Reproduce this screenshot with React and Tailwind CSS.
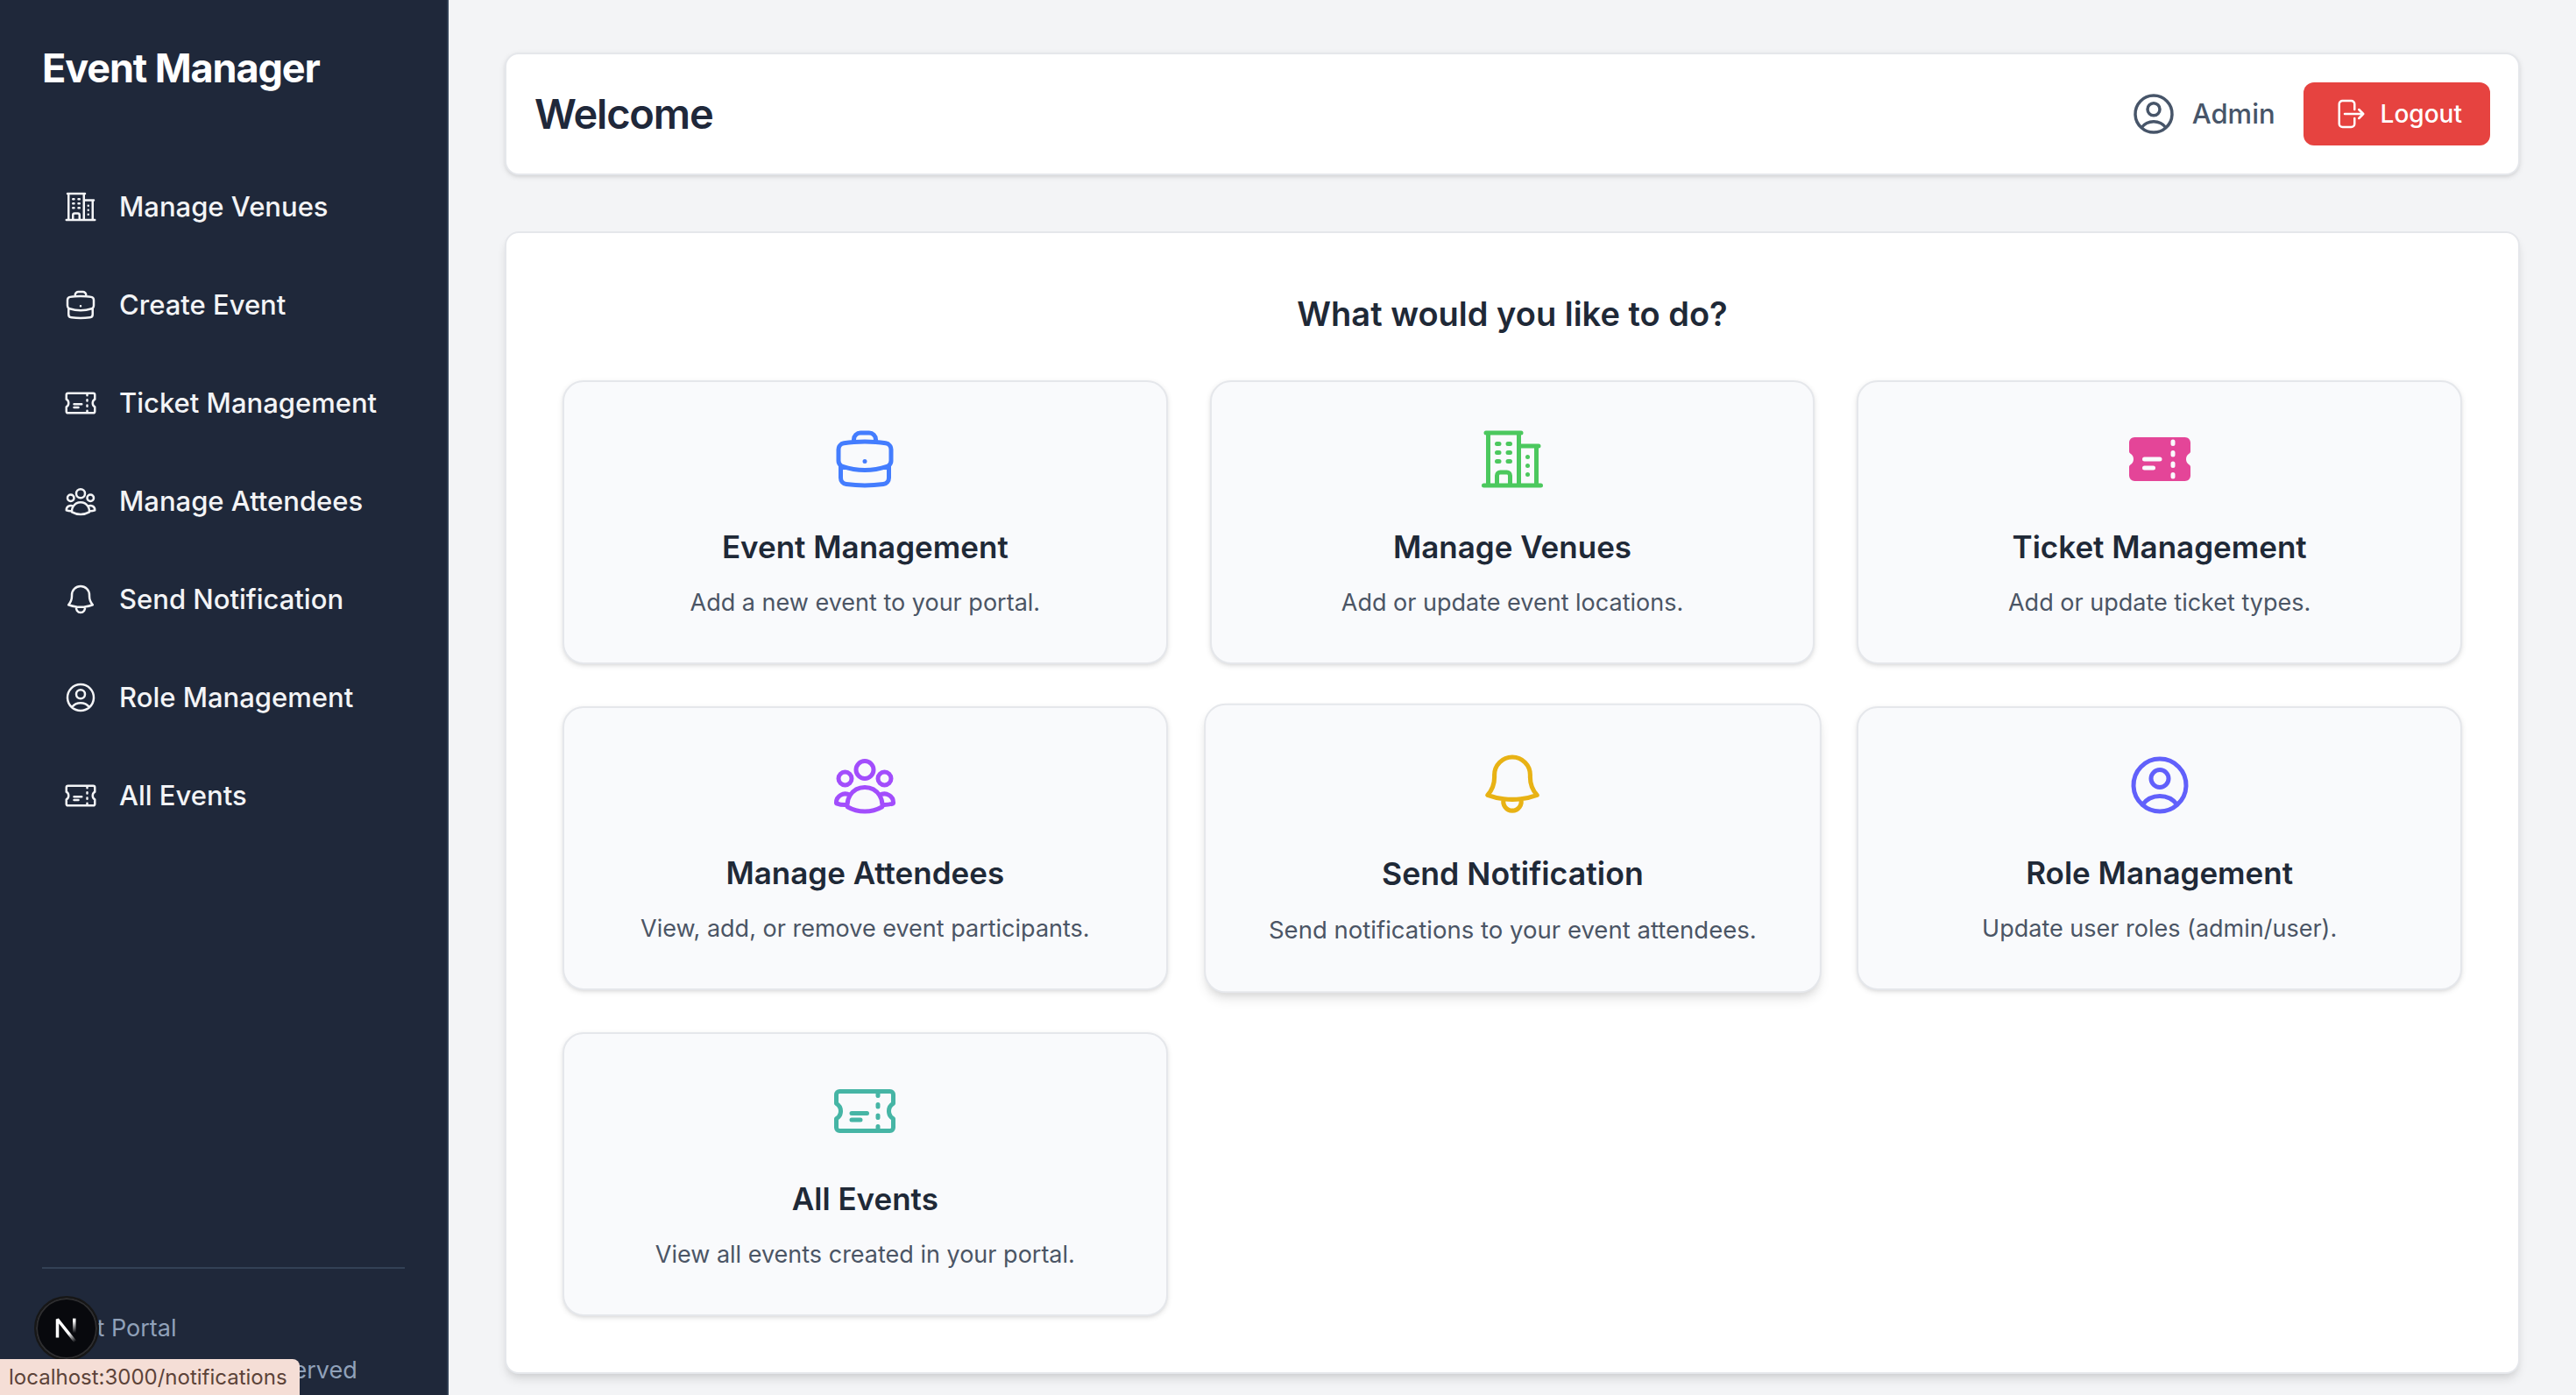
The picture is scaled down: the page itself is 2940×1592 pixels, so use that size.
import {
  HiOutlineArrowRightOnRectangle,
  HiOutlineBell,
  HiOutlineBriefcase,
  HiOutlineBuildingOffice2,
  HiOutlineTicket,
  HiOutlineUserCircle,
  HiOutlineUserGroup,
  HiTicket,
} from "react-icons/hi2";

const navItems = [
  { label: "Manage Venues", icon: HiOutlineBuildingOffice2 },
  { label: "Create Event", icon: HiOutlineBriefcase },
  { label: "Ticket Management", icon: HiOutlineTicket },
  { label: "Manage Attendees", icon: HiOutlineUserGroup },
  { label: "Send Notification", icon: HiOutlineBell },
  { label: "Role Management", icon: HiOutlineUserCircle },
  { label: "All Events", icon: HiOutlineTicket },
];

const cards = [
  { title: "Event Management", text: "Add a new event to your portal.", icon: HiOutlineBriefcase, color: "text-[#447dfe]" },
  { title: "Manage Venues", text: "Add or update event locations.", icon: HiOutlineBuildingOffice2, color: "text-[#4cc85e]" },
  { title: "Ticket Management", text: "Add or update ticket types.", icon: HiTicket, color: "text-[#e44598]" },
  { title: "Manage Attendees", text: "View, add, or remove event participants.", icon: HiOutlineUserGroup, color: "text-[#a24dfc]" },
  { title: "Send Notification", text: "Send notifications to your event attendees.", icon: HiOutlineBell, color: "text-[#e8b214]", active: true },
  { title: "Role Management", text: "Update user roles (admin/user).", icon: HiOutlineUserCircle, color: "text-[#6160fb]" },
  { title: "All Events", text: "View all events created in your portal.", icon: HiOutlineTicket, color: "text-[#46b5a5]" },
];

function Sidebar() {
  return (
    <aside className="sticky top-0 flex h-screen w-[512px] shrink-0 flex-col border-r-2 border-[#334155] bg-[#1f283a] px-12 pt-11 pb-2 text-[#f3f4f6]">
      <h1 className="text-[45px] leading-[68px] font-bold tracking-tight text-white">Event Manager</h1>
      <nav className="mt-[76px] flex flex-1 flex-col gap-4">
        {navItems.map(({ label, icon: Icon }) => (
          <a key={label} href="#" className="flex items-center gap-6 rounded-2xl p-6 text-[31px] leading-[48px] font-medium whitespace-nowrap">
            <Icon className="size-10 shrink-0" aria-hidden="true" />
            {label}
          </a>
        ))}
      </nav>
      <footer className="flex flex-col gap-2 border-t-2 border-[#334155] pt-12 text-[27px] leading-[40px] whitespace-nowrap text-[#90a1b9]">
        <p>Event Portal</p>
        <p>© 2025. All Rights Reserved</p>
      </footer>
    </aside>
  );
}

function Header() {
  return (
    <header className="flex items-center justify-between rounded-2xl border-2 border-[#e5e7eb] bg-white p-8 shadow-[0_2px_6px_rgba(0,0,0,0.1),0_2px_4px_-2px_rgba(0,0,0,0.1)]">
      <h2 className="text-[47px] leading-[68px] font-semibold tracking-tight text-[#1f283a]">Welcome</h2>
      <div className="flex items-center gap-8">
        <div className="flex items-center gap-4 text-[#475569]">
          <HiOutlineUserCircle className="size-14" aria-hidden="true" />
          <span className="text-[31px] leading-[48px] font-medium">Admin</span>
        </div>
        <button type="button" className="flex items-center gap-4 rounded-xl bg-[#e64340] px-8 py-4 text-[28px] leading-[40px] font-medium text-white">
          <HiOutlineArrowRightOnRectangle className="size-10" aria-hidden="true" />
          Logout
        </button>
      </div>
    </header>
  );
}

function ActionCard({ title, text, icon: Icon, color, active }) {
  const state = active
    ? "scale-[1.02] shadow-[0_8px_12px_-2px_rgba(0,0,0,0.1),0_4px_8px_-4px_rgba(0,0,0,0.1)]"
    : "shadow-[0_2px_6px_rgba(0,0,0,0.1),0_2px_4px_-2px_rgba(0,0,0,0.1)]";
  return (
    <a href="#" className={`flex flex-col items-center rounded-3xl border-2 border-[#e5e7eb] bg-[#f9fafc] p-12 text-center ${state}`}>
      <Icon className={`size-20 ${color}`} aria-hidden="true" />
      <h4 className="mt-8 text-[35px] leading-[56px] font-semibold text-[#1f2937]">{title}</h4>
      <p className="mt-4 text-[27px] leading-[40px] text-[#4b5565]">{text}</p>
    </a>
  );
}

function DevBadge() {
  return (
    <button type="button" aria-label="Open developer tools" className="fixed bottom-[39px] left-[39px] flex size-[74px] items-center justify-center rounded-full border-2 border-[#171717] bg-[#08090d] ring-2 ring-[#2e2e30] ring-inset">
      <svg viewBox="0 0 80 80" className="size-full" fill="none" aria-hidden="true">
        <defs>
          <linearGradient id="stem" x1="0" y1="26" x2="0" y2="46" gradientUnits="userSpaceOnUse">
            <stop offset="0.2" stopColor="#fff" />
            <stop offset="1" stopColor="#fff" stopOpacity="0" />
          </linearGradient>
          <linearGradient id="slash" x1="42" y1="43" x2="52" y2="57" gradientUnits="userSpaceOnUse">
            <stop offset="0.2" stopColor="#fff" />
            <stop offset="1" stopColor="#fff" stopOpacity="0" />
          </linearGradient>
        </defs>
        <path d="M28 52V28L51 57" stroke="url(#slash)" strokeWidth="4" strokeLinejoin="bevel" />
        <path d="M50 27V46" stroke="url(#stem)" strokeWidth="4" />
      </svg>
    </button>
  );
}

export default function App() {
  return (
    <div className="flex min-h-screen items-start bg-[#f3f4f6] font-['Inter',sans-serif]">
      <Sidebar />
      <main className="flex min-w-0 flex-1 flex-col gap-16 px-16 pt-[60px] pb-6">
        <Header />
        <section className="rounded-2xl border-2 border-[#e5e7eb] bg-white p-16 shadow-[0_8px_12px_-2px_rgba(0,0,0,0.1),0_4px_8px_-4px_rgba(0,0,0,0.1)]">
          <h3 className="mb-12 text-center text-[38px] leading-[56px] font-semibold text-[#1f2937]">What would you like to do?</h3>
          <div className="grid grid-cols-3 gap-12">
            {cards.map((card) => (
              <ActionCard key={card.title} {...card} />
            ))}
          </div>
        </section>
      </main>
      <DevBadge />
      <div className="fixed bottom-0 left-0 rounded-tr-lg bg-[#f5ded6] pr-3.5 pl-2.5 text-[24px] leading-[41px] text-[#5c4339]">localhost:3000/notifications</div>
    </div>
  );
}
